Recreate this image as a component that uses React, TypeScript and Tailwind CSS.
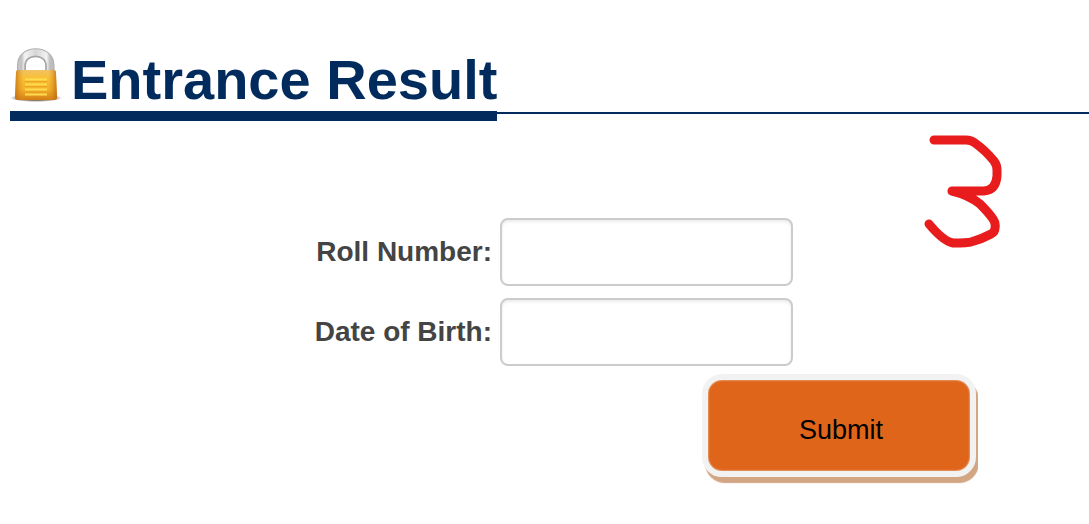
import React, { useState } from 'react'

function LockIcon() {
  return (
    <svg width="52" height="56" viewBox="0 0 52 56" aria-hidden="true" className="shrink-0">
      <defs>
        <linearGradient id="lock-body" x1="0" y1="0" x2="0" y2="1">
          <stop offset="0" stopColor="#f3c66c" />
          <stop offset="0.25" stopColor="#fbc63a" />
          <stop offset="0.65" stopColor="#f5b32a" />
          <stop offset="1" stopColor="#d07a14" />
        </linearGradient>
        <linearGradient id="lock-sides" x1="0" y1="0" x2="1" y2="0">
          <stop offset="0" stopColor="#c06a10" stopOpacity="0.8" />
          <stop offset="0.2" stopColor="#e09020" stopOpacity="0.1" />
          <stop offset="0.8" stopColor="#e09020" stopOpacity="0.1" />
          <stop offset="1" stopColor="#b86410" stopOpacity="0.8" />
        </linearGradient>
        <linearGradient id="lock-shackle" x1="0" y1="0" x2="1" y2="0">
          <stop offset="0" stopColor="#c4c4c4" />
          <stop offset="0.12" stopColor="#f4f4f4" />
          <stop offset="0.5" stopColor="#d6d6d6" />
          <stop offset="0.88" stopColor="#f2f2f2" />
          <stop offset="1" stopColor="#bdbdbd" />
        </linearGradient>
        <radialGradient id="lock-shadow">
          <stop offset="0.6" stopColor="#4a3520" stopOpacity="0.7" />
          <stop offset="1" stopColor="#4a3520" stopOpacity="0" />
        </radialGradient>
      </defs>
      <ellipse cx="26" cy="50" rx="26" ry="4" fill="url(#lock-shadow)" />
      <path d="M11.5 26V17C11.5 .5 40 .5 40 17V26" fill="none" stroke="#b0b0b0" strokeWidth="9" />
      <path d="M11.5 26V17C11.5 .5 40 .5 40 17V26" fill="none" stroke="url(#lock-shackle)" strokeWidth="7" />
      <path d="M15 23V18C15 5 36 5 36 18V23" fill="none" stroke="#a6a6a6" strokeWidth="1.5" />
      <path d="M8 22H44Q46 22 46 25L47 49Q47 52 44 52H8Q5 52 5 49L6 25Q6 22 8 22Z" fill="url(#lock-body)" />
      <path d="M8 22H44Q46 22 46 25L47 49Q47 52 44 52H8Q5 52 5 49L6 25Q6 22 8 22Z" fill="url(#lock-sides)" />
      <path d="M15 31.5H37M15 36.5H37M15 41.5H37M15 46.5H37" stroke="#ffdb50" strokeWidth="2" />
      <path d="M15 33.5H37M15 38.5H37M15 43.5H37" stroke="#eda51f" strokeWidth="1" />
    </svg>
  )
}

function Scribble() {
  return (
    <svg width="80" height="116" viewBox="0 0 80 116" role="img" aria-label="3" className="absolute top-[134px] left-[923px]">
      <path
        d="M11 6H43Q48 6 52 9Q63 17 71 27Q74 31 74 36V42Q73 56 61 57L29 57Q46 61 57 70Q66 79 70 85Q73 89 72 94Q72 98 68 100Q59 105 48 108Q45 109 30 109Q20 107 6 90"
        fill="none"
        stroke="#e81c1c"
        strokeWidth="9"
        strokeLinecap="round"
        strokeLinejoin="round"
      />
    </svg>
  )
}

interface FieldProps {
  id: string
  label: string
  value: string
  onChange: (value: string) => void
}

function Field({ id, label, value, onChange }: FieldProps) {
  return (
    <div className="flex items-center gap-2">
      <label htmlFor={id} className="w-[492px] text-right text-[28px] leading-8 font-bold text-[#444]">
        {label}
      </label>
      <input
        id={id}
        type="text"
        value={value}
        onChange={e => onChange(e.target.value)}
        className="h-[68px] w-[293px] rounded-lg border-2 border-[#ccc] bg-white px-3 text-[28px] text-[#444] shadow-[inset_0_2px_3px_rgba(0,0,0,0.08)] outline-none"
      />
    </div>
  )
}

export default function App() {
  const [rollNumber, setRollNumber] = useState('')
  const [birthDate, setBirthDate] = useState('')

  return (
    <main className="relative min-h-screen overflow-x-hidden bg-white pt-12 font-['Liberation_Sans',Arial,sans-serif]">
      <header className="flex items-end pl-[10px]">
        <h1 className="flex items-start gap-[9px] border-b-10 border-[#002b5c] pb-[3px] text-[56px] leading-[56px] font-bold text-[#002b5c]">
          <LockIcon />
          <span className="pt-1">Entrance Result</span>
        </h1>
        <div className="mb-[7px] h-[2px] flex-1 bg-[#002b5c]" />
      </header>

      <form onSubmit={e => e.preventDefault()} className="flex flex-col gap-3 pt-[97px]">
        <Field id="roll-number" label="Roll Number:" value={rollNumber} onChange={setRollNumber} />
        <Field id="birth-date" label="Date of Birth:" value={birthDate} onChange={setBirthDate} />
        {/* the wrapper cuts the button's shadow off on the right */}
        <div className="-mt-1 ml-[702px] w-[276px] overflow-hidden pb-2">
          <button
            type="submit"
            className="h-[103px] w-[274px] rounded-[20px] border-6 border-[#f2f2f2] bg-[#df651a] pt-2 pl-1 text-[27px] leading-8 text-black shadow-[3px_6px_1px_#d2a583,inset_0_0_2px_#f2f2f2]"
          >
            Submit
          </button>
        </div>
      </form>

      <Scribble />
    </main>
  )
}
